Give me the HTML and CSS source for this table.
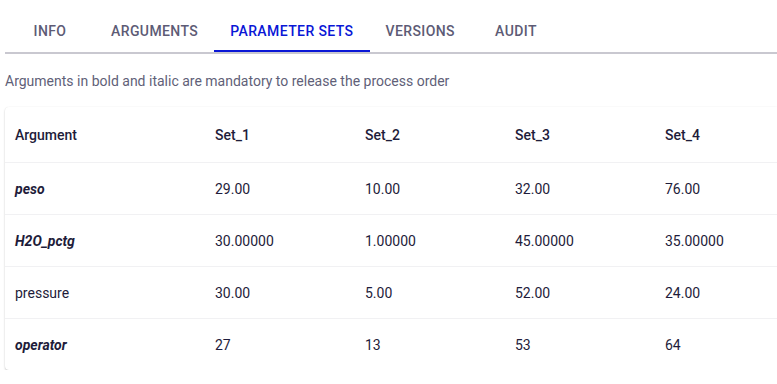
FILE: index.html
```html
<!DOCTYPE html>
<html>
<head>
<meta charset="utf-8">
<link rel="stylesheet" href="styles.css">
</head>
<body>
<div class="page">
  <nav class="tabs">
    <div class="tab">Info</div>
    <div class="tab">Arguments</div>
    <div class="tab active">Parameter Sets</div>
    <div class="tab">Versions</div>
    <div class="tab">Audit</div>
  </nav>
  <p class="note">Arguments in bold and italic are mandatory to release the process order</p>
  <div class="card">
    <table class="grid">
      <colgroup>
        <col class="c-arg"><col class="c-set"><col class="c-set"><col class="c-set"><col class="c-set">
      </colgroup>
      <thead>
        <tr><th>Argument</th><th>Set_1</th><th>Set_2</th><th>Set_3</th><th>Set_4</th></tr>
      </thead>
      <tbody>
        <tr><td class="req">peso</td><td>29.00</td><td>10.00</td><td>32.00</td><td>76.00</td></tr>
        <tr><td class="req">H2O_pctg</td><td>30.00000</td><td>1.00000</td><td>45.00000</td><td>35.00000</td></tr>
        <tr><td>pressure</td><td>30.00</td><td>5.00</td><td>52.00</td><td>24.00</td></tr>
        <tr><td class="req">operator</td><td>27</td><td>13</td><td>53</td><td>64</td></tr>
      </tbody>
    </table>
  </div>
</div>
</body>
</html>
```
FILE: styles.css
```css
html, body {
  margin: 0;
  padding: 0;
  background: #ffffff;
  overflow: hidden;
}
body {
  font-family: Roboto, "Liberation Sans", sans-serif;
  color: #1e1c3a;
}
.page {
  padding: 4px 0 0 5px;
}
.tabs {
  display: flex;
  border-bottom: 2px solid #c9c8d0;
}
.tab {
  min-width: 90px;
  box-sizing: border-box;
  padding: 8px 16px 0;
  height: 48px;
  display: flex;
  align-items: center;
  justify-content: center;
  font-size: 14px;
  font-weight: 500;
  text-transform: uppercase;
  letter-spacing: 0.4px;
  color: #5d5b75;
  border-bottom: 2px solid transparent;
}
.tab.active {
  color: #0a17d6;
  border-bottom-color: #0a17d6;
}
.note {
  margin: 17px 0 0 0;
  font-size: 14px;
  line-height: 20px;
  color: #615f78;
}
.card {
  margin-top: 16px;
  background: #fff;
  border-radius: 4px 0 0 4px;
  overflow: hidden;
  box-shadow: 0 1px 2px rgba(0,0,0,0.22), 0 0 1px rgba(0,0,0,0.08);
}
.grid {
  border-collapse: collapse;
  table-layout: fixed;
  width: 800px;
  font-size: 14px;
}
.c-arg { width: 200px; }
.c-set { width: 150px; }
.grid th, .grid td {
  text-align: left;
  padding: 0 0 0 10px;
  color: #1e1c3a;
}
.grid th {
  height: 55px;
  font-weight: 500;
  border-bottom: 1px solid #f1f1f3;
}
.grid td {
  height: 51px;
  font-weight: 400;
  border-bottom: 1px solid #f1f1f3;
}
.grid tbody tr:last-child td {
  border-bottom: none;
}
.grid td.req {
  font-weight: 700;
  font-style: italic;
}
```
